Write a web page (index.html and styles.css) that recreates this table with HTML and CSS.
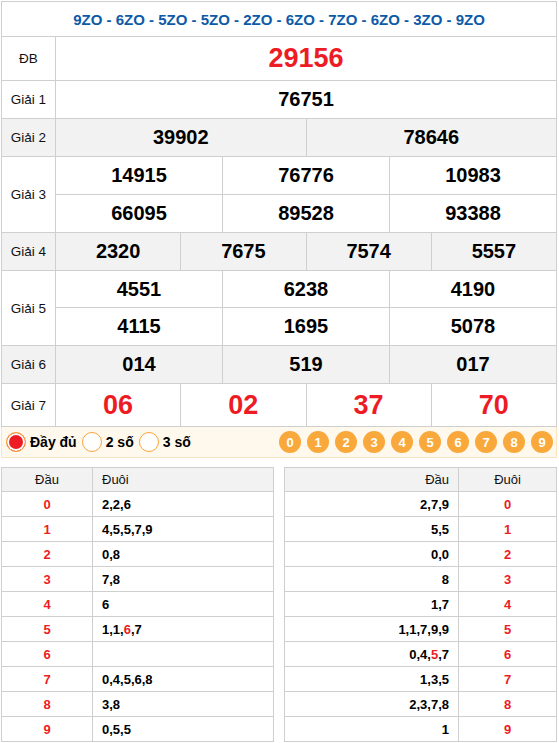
FILE: index.html
```html
<!DOCTYPE html>
<html lang="vi">
<head>
<meta charset="utf-8">
<title>KQ</title>
<link rel="stylesheet" href="styles.css">
</head>
<body>
<div class="page">
  <table class="kq">
    <colgroup><col class="c-lbl"><col span="12"></colgroup>
    <tr class="r-hdr"><td colspan="13" class="code">9ZO - 6ZO - 5ZO - 5ZO - 2ZO - 6ZO - 7ZO - 6ZO - 3ZO - 9ZO</td></tr>
    <tr class="r-big"><td class="lbl">ĐB</td><td colspan="12" class="num big red">29156</td></tr>
    <tr class="r-n"><td class="lbl">Giải 1</td><td colspan="12" class="num">76751</td></tr>
    <tr class="r-n gray"><td class="lbl">Giải 2</td><td colspan="6" class="num">39902</td><td colspan="6" class="num">78646</td></tr>
    <tr class="r-n"><td class="lbl" rowspan="2">Giải 3</td><td colspan="4" class="num">14915</td><td colspan="4" class="num">76776</td><td colspan="4" class="num">10983</td></tr>
    <tr class="r-n"><td colspan="4" class="num">66095</td><td colspan="4" class="num">89528</td><td colspan="4" class="num">93388</td></tr>
    <tr class="r-n gray"><td class="lbl">Giải 4</td><td colspan="3" class="num">2320</td><td colspan="3" class="num">7675</td><td colspan="3" class="num">7574</td><td colspan="3" class="num">5557</td></tr>
    <tr class="r-s"><td class="lbl" rowspan="2">Giải 5</td><td colspan="4" class="num">4551</td><td colspan="4" class="num">6238</td><td colspan="4" class="num">4190</td></tr>
    <tr class="r-n"><td colspan="4" class="num">4115</td><td colspan="4" class="num">1695</td><td colspan="4" class="num">5078</td></tr>
    <tr class="r-n gray"><td class="lbl">Giải 6</td><td colspan="4" class="num">014</td><td colspan="4" class="num">519</td><td colspan="4" class="num">017</td></tr>
    <tr class="r-last"><td class="lbl">Giải 7</td><td colspan="3" class="num big red">06</td><td colspan="3" class="num big red">02</td><td colspan="3" class="num big red">37</td><td colspan="3" class="num big red">70</td></tr>
  </table>

  <div class="opts">
    <div class="radios">
      <label class="radio"><span class="dot on"></span>Đầy đủ</label>
      <label class="radio"><span class="dot"></span>2 số</label>
      <label class="radio"><span class="dot"></span>3 số</label>
    </div>
    <div class="balls">
      <span class="ball">0</span><span class="ball">1</span><span class="ball">2</span><span class="ball">3</span><span class="ball">4</span><span class="ball">5</span><span class="ball">6</span><span class="ball">7</span><span class="ball">8</span><span class="ball">9</span>
    </div>
  </div>

  <div class="loto">
    <table class="lt">
      <colgroup><col class="lc1"><col></colgroup>
      <tr class="lh"><th class="ctr">Đầu</th><th class="lft">Đuôi</th></tr>
      <tr><td class="d">0</td><td class="v">2,2,6</td></tr>
      <tr><td class="d">1</td><td class="v">4,5,5,7,9</td></tr>
      <tr><td class="d">2</td><td class="v">0,8</td></tr>
      <tr><td class="d">3</td><td class="v">7,8</td></tr>
      <tr><td class="d">4</td><td class="v">6</td></tr>
      <tr><td class="d">5</td><td class="v">1,1,<span class="red">6</span>,7</td></tr>
      <tr><td class="d">6</td><td class="v"></td></tr>
      <tr><td class="d">7</td><td class="v">0,4,5,6,8</td></tr>
      <tr><td class="d">8</td><td class="v">3,8</td></tr>
      <tr><td class="d">9</td><td class="v">0,5,5</td></tr>
    </table>
    <table class="lt">
      <colgroup><col class="rc1"><col></colgroup>
      <tr class="lh"><th class="rgt">Đầu</th><th class="ctr">Đuôi</th></tr>
      <tr><td class="v vr">2,7,9</td><td class="d">0</td></tr>
      <tr><td class="v vr">5,5</td><td class="d">1</td></tr>
      <tr><td class="v vr">0,0</td><td class="d">2</td></tr>
      <tr><td class="v vr">8</td><td class="d">3</td></tr>
      <tr><td class="v vr">1,7</td><td class="d">4</td></tr>
      <tr><td class="v vr">1,1,7,9,9</td><td class="d">5</td></tr>
      <tr><td class="v vr">0,4,<span class="red">5</span>,7</td><td class="d">6</td></tr>
      <tr><td class="v vr">1,3,5</td><td class="d">7</td></tr>
      <tr><td class="v vr">2,3,7,8</td><td class="d">8</td></tr>
      <tr><td class="v vr">1</td><td class="d">9</td></tr>
    </table>
  </div>
</div>
</body>
</html>
```

FILE: styles.css
```css
html, body {
  margin: 0;
  padding: 0;
  background: #fff;
}
body {
  font-family: "Liberation Sans", Arial, sans-serif;
  color: #000;
}
.page {
  width: 556px;
  margin: 1px 0 0 1px;
}
.kq {
  width: 556px;
  border-collapse: collapse;
  table-layout: fixed;
}
.kq td {
  border: 1px solid #cfcfcf;
  padding: 0;
  text-align: center;
  vertical-align: middle;
}
.c-lbl { width: 54px; }
.r-hdr { height: 35px; }
.r-big { height: 44px; }
.r-last { height: 43px; }
.r-n { height: 38px; }
.r-s { height: 37px; }
.gray td { background: #f2f2f2; }
.code {
  color: #0d5aa7;
  font-weight: bold;
  font-size: 15px;
}
.lbl {
  font-size: 13.5px;
  color: #111;
}
.num {
  font-size: 20px;
  font-weight: bold;
  color: #000;
}
.num.big {
  font-size: 27px;
}
.red { color: #ed1c24; }

.opts {
  display: flex;
  align-items: center;
  justify-content: space-between;
  height: 30px;
  background: #fff8ec;
  border: 1px solid #fbe4c2;
  border-top: none;
  padding: 0 3px 0 4px;
}
.radios {
  display: flex;
  align-items: center;
}
.radio {
  display: flex;
  align-items: center;
  font-size: 14px;
  font-weight: bold;
  margin-right: 5px;
}
.dot {
  box-sizing: border-box;
  width: 20px;
  height: 20px;
  border-radius: 50%;
  border: 1px solid #f6a53a;
  background: #fff;
  margin-right: 4px;
}
.dot.on {
  background: #ed1c24;
  box-shadow: inset 0 0 0 2px #fff;
}
.balls {
  display: flex;
  gap: 6px;
}
.ball {
  width: 22px;
  height: 22px;
  border-radius: 50%;
  background: #f9a83b;
  color: #fff;
  font-size: 13px;
  font-weight: bold;
  display: flex;
  align-items: center;
  justify-content: center;
}

.loto {
  display: flex;
  align-items: flex-start;
  justify-content: space-between;
  margin-top: 9px;
}
.lt {
  width: 273px;
  border-collapse: collapse;
  table-layout: fixed;
}
.lc1 { width: 91px; }
.rc1 { width: 174px; }
.lt tr { height: 25px; }
.lt tr.lh { height: 24px; }
.lt th, .lt td {
  border: 1px solid #cfcfcf;
  padding: 0 9px;
  font-size: 13px;
}
.lt th {
  background: #f2f2f2;
  font-weight: normal;
  color: #111;
}
.lt .ctr { text-align: center; }
.lt .lft { text-align: left; }
.lt .rgt { text-align: right; }
.lt .d {
  text-align: center;
  color: #ed1c24;
  font-weight: bold;
}
.lt .v {
  font-weight: bold;
  text-align: left;
}
.lt .v.vr { text-align: right; }
```
